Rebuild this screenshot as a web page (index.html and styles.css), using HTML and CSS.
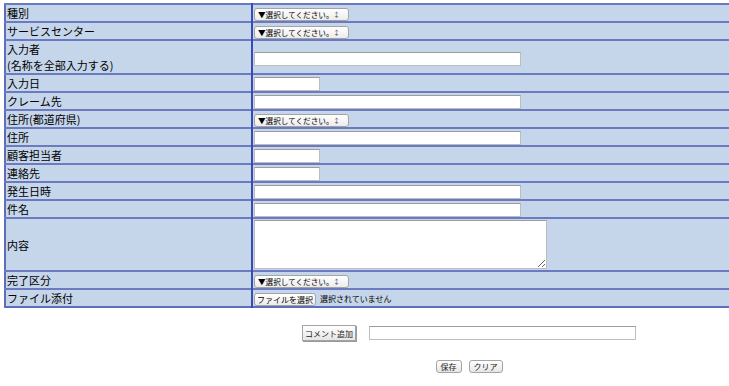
FILE: index.html
```html
<!DOCTYPE html>
<html lang="ja">
<head>
<meta charset="UTF-8">
<title>クレーム登録</title>
<link rel="stylesheet" href="styles.css">
</head>
<body>

<div class="page">
  <form id="claim-form">
    <table class="form-table">
      <tr>
        <th>種別</th>
        <td><span class="sel"><select><option>▼選択してください。</option></select></span></td>
      </tr>
      <tr>
        <th>サービスセンター</th>
        <td><span class="sel"><select><option>▼選択してください。</option></select></span></td>
      </tr>
      <tr class="tall">
        <th>入力者<br>(名称を全部入力する)</th>
        <td><input type="text" class="txt-long"></td>
      </tr>
      <tr>
        <th>入力日</th>
        <td><input type="text" class="txt-short"></td>
      </tr>
      <tr>
        <th>クレーム先</th>
        <td><input type="text" class="txt-long"></td>
      </tr>
      <tr>
        <th>住所(都道府県)</th>
        <td><span class="sel"><select><option>▼選択してください。</option></select></span></td>
      </tr>
      <tr>
        <th>住所</th>
        <td><input type="text" class="txt-long"></td>
      </tr>
      <tr>
        <th>顧客担当者</th>
        <td><input type="text" class="txt-short"></td>
      </tr>
      <tr>
        <th>連絡先</th>
        <td><input type="text" class="txt-short"></td>
      </tr>
      <tr>
        <th>発生日時</th>
        <td><input type="text" class="txt-long"></td>
      </tr>
      <tr>
        <th>件名</th>
        <td><input type="text" class="txt-long"></td>
      </tr>
      <tr>
        <th>内容</th>
        <td><textarea></textarea></td>
      </tr>
      <tr>
        <th>完了区分</th>
        <td><span class="sel"><select><option>▼選択してください。</option></select></span></td>
      </tr>
      <tr>
        <th>ファイル添付</th>
        <td><span class="file-btn">ファイルを選択</span><span class="file-note">選択されていません</span></td>
      </tr>
    </table>

    <div class="comment-row">
      <button type="button" class="btn btn-comment">コメント追加</button>
      <input type="text" class="txt-comment">
    </div>

    <div class="action-row">
      <button type="submit" class="btn btn-small">保存</button>
      <button type="reset" class="btn btn-small">クリア</button>
    </div>
  </form>
</div>

</body>
</html>
```

FILE: styles.css
```css
body {
  margin: 0;
  background: #fff;
  font-family: "Noto Sans CJK JP", "Noto Sans", sans-serif;
  color: #000;
  overflow: hidden;
}
.page {
  width: 930px;
  padding: 3px 0 0 4px;
}
.form-table {
  width: 100%;
  border-collapse: collapse;
  border: 2px solid #5f6dbd;
  font-size: 11px;
}
.form-table th,
.form-table td {
  height: 16px;
  padding: 0 1px;
  line-height: 14px;
  background: #c5d5ea;
  border-top: 2px solid #6c7ac2;
  vertical-align: middle;
}
.form-table th {
  width: 243px;
  text-align: left;
  font-weight: normal;
  border-right: 2px solid #3b4ab5;
}
.form-table tr.tall th,
.form-table tr.tall td {
  height: 32px;
  line-height: 16px;
}
.form-table td > * {
  vertical-align: middle;
}
.sel {
  position: relative;
  display: inline-block;
  height: 13px;
}
.sel select {
  display: block;
  appearance: none;
  -webkit-appearance: none;
  width: 95px;
  height: 13px;
  margin: 0;
  padding: 0 0 0 3px;
  font-size: 7.6px;
  line-height: 11px;
  font-family: inherit;
  border: 1px solid #a4a4a4;
  border-radius: 3px;
  background: linear-gradient(#ffffff, #ececec);
  color: #000;
}
.sel::after {
  content: "\2195";
  position: absolute;
  right: 9px;
  top: 0;
  font-size: 7px;
  line-height: 13px;
  color: #555;
  pointer-events: none;
}
input[type="text"],
textarea {
  box-sizing: border-box;
  border: 1px solid #bdbdbd;
  border-top-color: #9c9c9c;
  background: #fff;
  margin: 0;
  padding: 0;
}
.txt-long {
  width: 267px;
  height: 14px;
}
.txt-short {
  width: 66px;
  height: 14px;
}
textarea {
  display: block;
  width: 293px;
  height: 49px;
  margin: 1px 0;
  resize: both;
}
.file-btn {
  display: inline-block;
  box-sizing: border-box;
  width: 62px;
  height: 13px;
  font-size: 8px;
  line-height: 11px;
  text-align: center;
  border: 1px solid #a4a4a4;
  border-radius: 3px;
  background: linear-gradient(#ffffff, #ececec);
}
.file-note {
  margin-left: 4px;
  font-size: 8px;
}
.comment-row {
  display: flex;
  justify-content: center;
  align-items: center;
  gap: 13px;
  margin-top: 17px;
}
.btn {
  font-family: inherit;
  font-size: 8px;
  line-height: 11px;
  white-space: nowrap;
  color: #222;
  border: 1px solid #a4a4a4;
  border-radius: 2px;
  background: linear-gradient(#ffffff, #e6e6e6);
  padding: 0;
  cursor: pointer;
}
.btn-comment {
  width: 54px;
  height: 16px;
  border-radius: 0;
  box-shadow: 1px 1px 0 #999;
}
.txt-comment {
  width: 267px;
  height: 14px;
}
.action-row {
  display: flex;
  justify-content: center;
  gap: 7px;
  margin-top: 19px;
}
.btn-small {
  height: 13px;
  padding: 0 4px;
  border-radius: 3px;
}
```
